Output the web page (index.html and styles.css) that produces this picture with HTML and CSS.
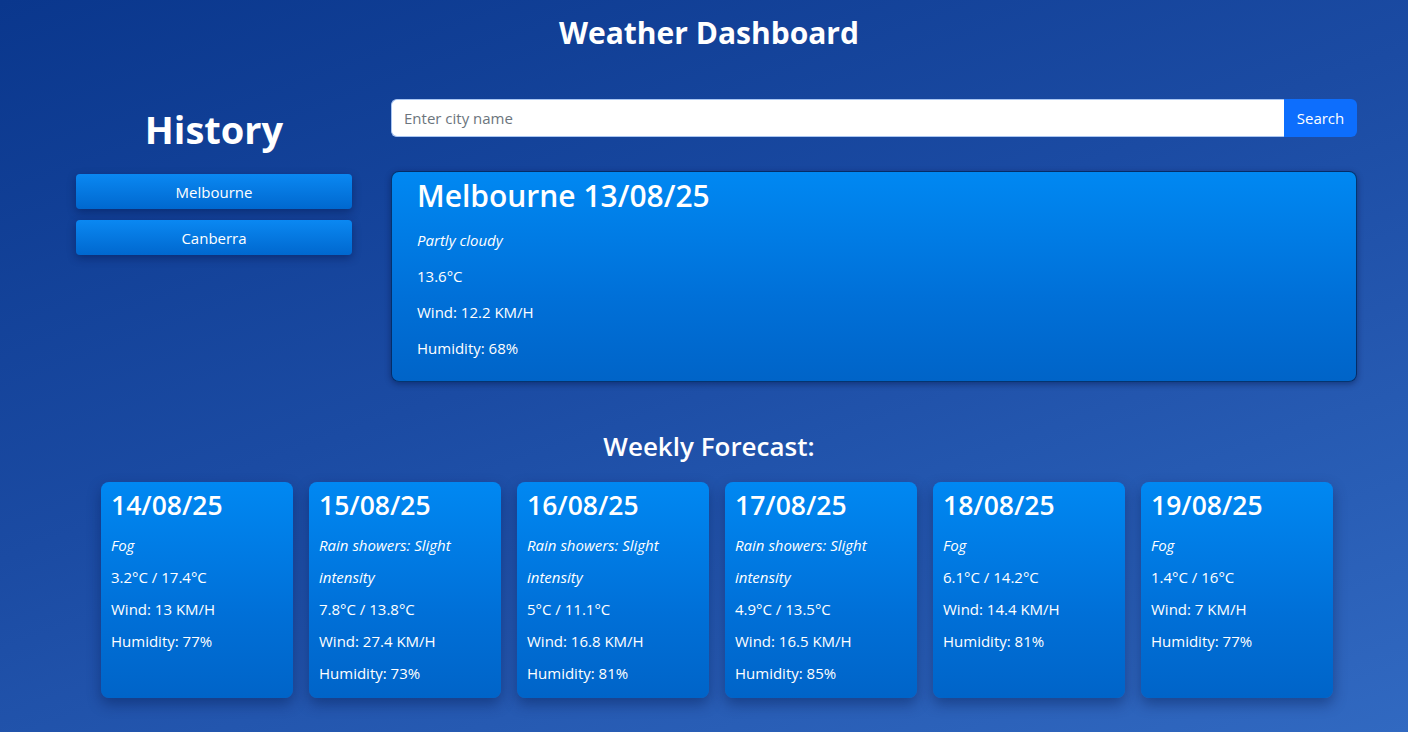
FILE: index.html
```html
<!DOCTYPE html>
<html lang="en">
<head>
<meta charset="utf-8">
<title>Weather Dashboard</title>
<link rel="stylesheet" href="styles.css">
</head>
<body>
<h2 class="app-title">Weather Dashboard</h2>
<div class="layout">
  <aside class="history">
    <h1 class="history-title">History</h1>
    <button class="history-btn">Melbourne</button>
    <button class="history-btn">Canberra</button>
  </aside>
  <main class="content">
    <div class="search">
      <input class="search-input" type="text" placeholder="Enter city name">
      <button class="search-btn">Search</button>
    </div>
    <section class="current">
      <h2 class="current-title">Melbourne 13/08/25</h2>
      <p class="line"><em>Partly cloudy</em></p>
      <p class="line">13.6°C</p>
      <p class="line">Wind: 12.2 KM/H</p>
      <p class="line">Humidity: 68%</p>
    </section>
  </main>
</div>
<h3 class="week-title">Weekly Forecast:</h3>
<div class="forecast">
  <div class="day">
    <h3 class="day-date">14/08/25</h3>
    <p class="dline"><em>Fog</em></p>
    <p class="dline">3.2°C / 17.4°C</p>
    <p class="dline">Wind: 13 KM/H</p>
    <p class="dline">Humidity: 77%</p>
  </div>
  <div class="day">
    <h3 class="day-date">15/08/25</h3>
    <p class="dline"><em>Rain showers: Slight intensity</em></p>
    <p class="dline">7.8°C / 13.8°C</p>
    <p class="dline">Wind: 27.4 KM/H</p>
    <p class="dline">Humidity: 73%</p>
  </div>
  <div class="day">
    <h3 class="day-date">16/08/25</h3>
    <p class="dline"><em>Rain showers: Slight intensity</em></p>
    <p class="dline">5°C / 11.1°C</p>
    <p class="dline">Wind: 16.8 KM/H</p>
    <p class="dline">Humidity: 81%</p>
  </div>
  <div class="day">
    <h3 class="day-date">17/08/25</h3>
    <p class="dline"><em>Rain showers: Slight intensity</em></p>
    <p class="dline">4.9°C / 13.5°C</p>
    <p class="dline">Wind: 16.5 KM/H</p>
    <p class="dline">Humidity: 85%</p>
  </div>
  <div class="day">
    <h3 class="day-date">18/08/25</h3>
    <p class="dline"><em>Fog</em></p>
    <p class="dline">6.1°C / 14.2°C</p>
    <p class="dline">Wind: 14.4 KM/H</p>
    <p class="dline">Humidity: 81%</p>
  </div>
  <div class="day">
    <h3 class="day-date">19/08/25</h3>
    <p class="dline"><em>Fog</em></p>
    <p class="dline">1.4°C / 16°C</p>
    <p class="dline">Wind: 7 KM/H</p>
    <p class="dline">Humidity: 77%</p>
  </div>
</div>
</body>
</html>
```
FILE: styles.css
```css
* { box-sizing: border-box; }
html, body { margin: 0; padding: 0; }
body {
  min-height: 732px;
  font-family: "Open Sans", "Noto Sans", sans-serif;
  color: #fff;
  background: linear-gradient(160deg, #0a378d 0%, #1b4ba3 45%, #3169c1 100%);
  overflow: hidden;
}
.app-title {
  margin: 0;
  padding: 15px 0 0 10px;
  text-align: center;
  font-size: 30px;
  line-height: 36px;
  font-weight: 700;
}
.layout {
  display: flex;
  gap: 39px;
  padding: 48px 0 0 76px;
}
.history {
  width: 276px;
  display: flex;
  flex-direction: column;
  gap: 11px;
}
.history-title {
  margin: 7px 0 11px;
  text-align: center;
  font-size: 38px;
  line-height: 46px;
  font-weight: 700;
}
.history-btn {
  height: 35px;
  border: none;
  border-radius: 4px;
  color: #fff;
  font-family: inherit;
  font-size: 15px;
  background: linear-gradient(180deg, #0a88f2 0%, #0068cf 100%);
  box-shadow: 0 3px 8px rgba(0, 20, 70, 0.45);
}
.content {
  width: 966px;
}
.search {
  display: flex;
  height: 38px;
}
.search-input {
  flex: 1;
  border: 1px solid #aac6f2;
  border-right: none;
  border-radius: 6px 0 0 6px;
  padding: 0 12px;
  font-family: inherit;
  font-size: 15px;
  color: #212529;
  background: #fff;
}
.search-input::placeholder { color: #6c757d; }
.search-btn {
  width: 73px;
  border: none;
  border-radius: 0 6px 6px 0;
  background: #0d6efd;
  color: #fff;
  font-family: inherit;
  font-size: 15px;
}
.current {
  margin-top: 34px;
  height: 211px;
  padding: 5px 25px 15px;
  border: 1px solid rgba(5, 25, 70, 0.75);
  border-radius: 8px;
  background: linear-gradient(180deg, #0088f2 0%, #0070d8 60%, #0064c8 100%);
  box-shadow: 0 2px 6px rgba(0, 15, 60, 0.45);
}
.current-title {
  margin: 0 0 7px;
  font-size: 30px;
  line-height: 38px;
  font-weight: 600;
}
.line {
  margin: 0;
  font-size: 15px;
  line-height: 36px;
}
.week-title {
  margin: 0;
  padding: 47px 0 0 10px;
  text-align: center;
  font-size: 26px;
  line-height: 34px;
  font-weight: 600;
}
.forecast {
  display: flex;
  gap: 16px;
  padding: 19px 0 0 101px;
}
.day {
  width: 192px;
  height: 216px;
  padding: 6px 10px 9px;
  border-radius: 8px;
  background: linear-gradient(180deg, #0088f2 0%, #0070d8 60%, #0064c8 100%);
  box-shadow: 0 6px 14px rgba(0, 20, 70, 0.4);
}
.day-date {
  margin: 0 0 7px;
  font-size: 26.5px;
  line-height: 34px;
  font-weight: 600;
}
.dline {
  margin: 0;
  font-size: 15px;
  line-height: 32px;
}
```
